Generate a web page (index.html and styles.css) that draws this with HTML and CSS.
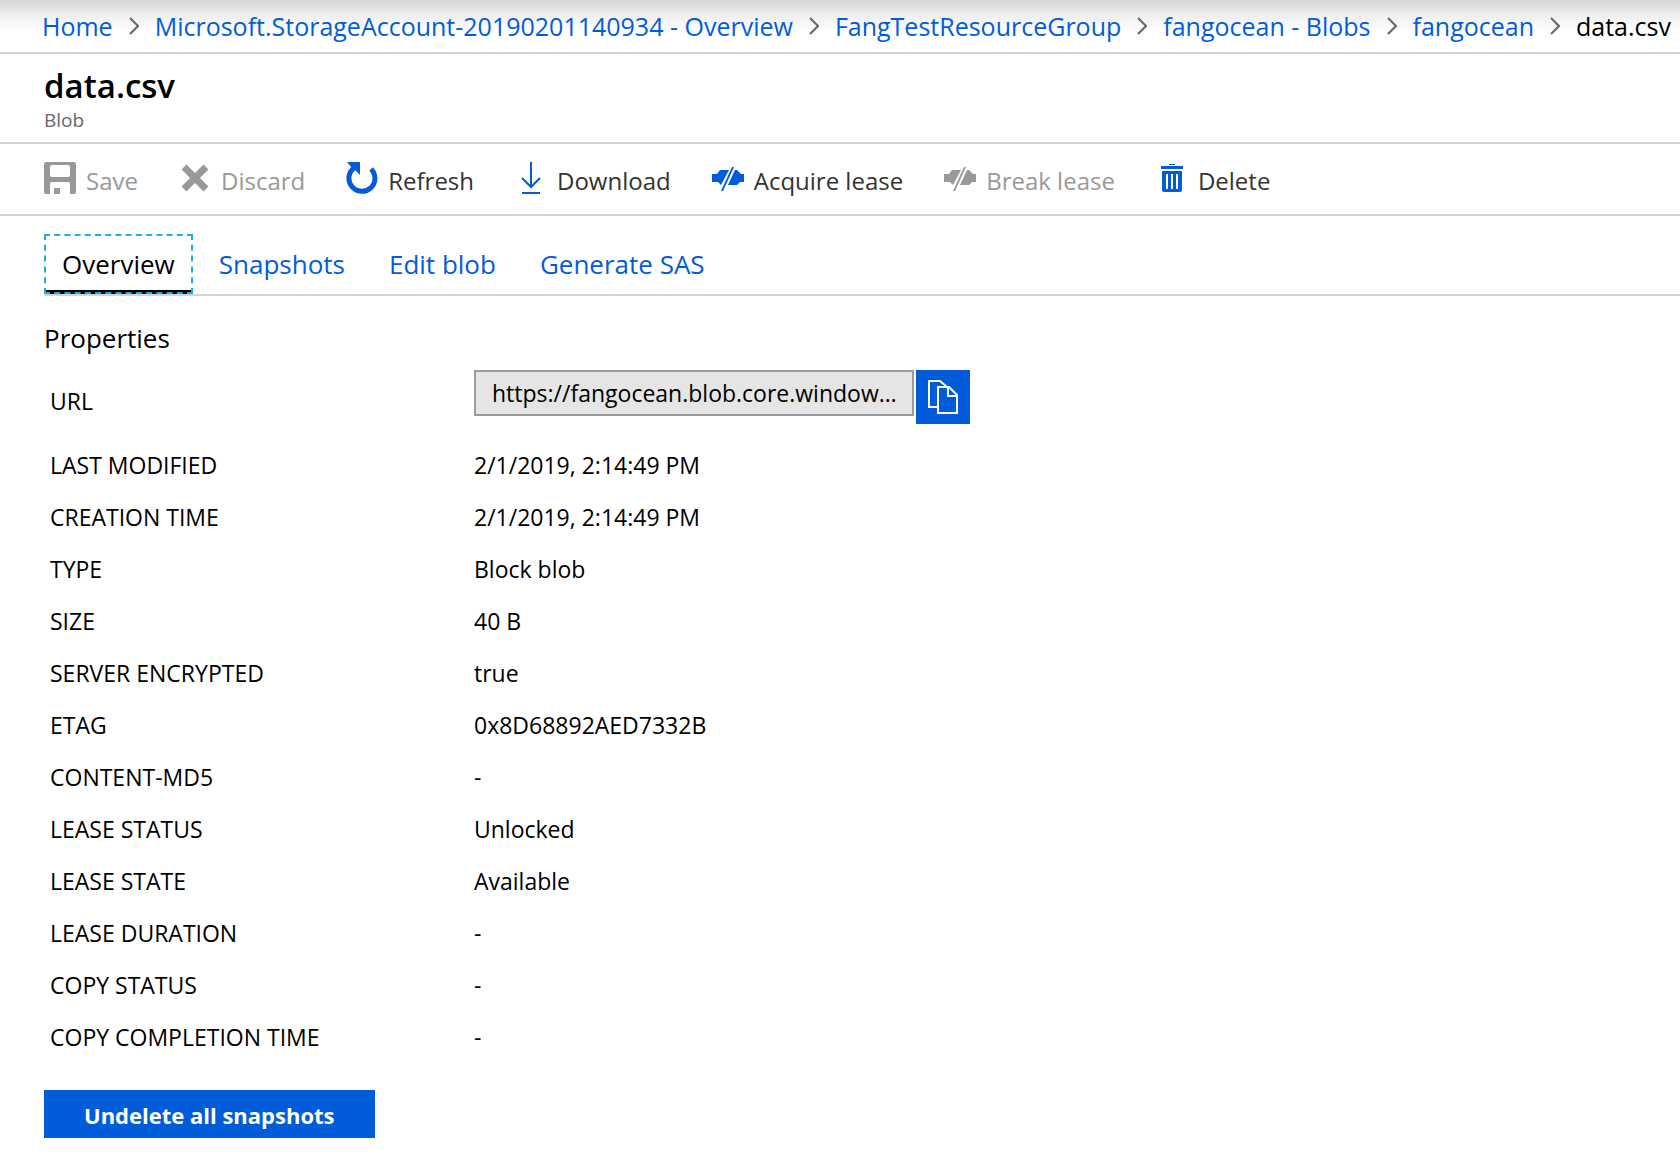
FILE: index.html
```html
<!DOCTYPE html>
<html lang="en">
<head>
<meta charset="utf-8">
<meta name="viewport" content="width=device-width, initial-scale=1">
<title>data.csv - Blob</title>
<link rel="stylesheet" href="styles.css">
</head>
<body>
<svg class="sprite" aria-hidden="true">
  <symbol id="chevron" viewBox="0 0 10 18"><path d="M1 1l8 8-8 8" fill="none" stroke="#666" stroke-width="2"/></symbol>
  <symbol id="lease" viewBox="0 0 32 32"><path fill="currentColor" d="M0 12h5l3-4h9L9 23l-3-3H0zM20 5h2L11 29H9zM23 8h2l4 4h3v8h-4l-3 3h-9z"/></symbol>
</svg>

<nav class="breadcrumb" aria-label="Breadcrumb">
  <a href="#">Home</a>
  <svg class="chevron" aria-hidden="true"><use href="#chevron"/></svg>
  <a href="#">Microsoft.StorageAccount-20190201140934 - Overview</a>
  <svg class="chevron" aria-hidden="true"><use href="#chevron"/></svg>
  <a href="#">FangTestResourceGroup</a>
  <svg class="chevron" aria-hidden="true"><use href="#chevron"/></svg>
  <a href="#">fangocean - Blobs</a>
  <svg class="chevron" aria-hidden="true"><use href="#chevron"/></svg>
  <a href="#">fangocean</a>
  <svg class="chevron" aria-hidden="true"><use href="#chevron"/></svg>
  <span aria-current="page">data.csv</span>
</nav>

<header class="blade-header">
  <h1>data.csv</h1>
  <p>Blob</p>
</header>

<div class="toolbar" role="toolbar" aria-label="Blob commands">
  <button type="button" disabled>
    <svg class="icon" viewBox="0 0 32 32" aria-hidden="true"><path fill="currentColor" fill-rule="evenodd" d="M2 0h28a2 2 0 0 1 2 2v28a2 2 0 0 1-2 2h-4V22a2 2 0 0 0-2-2H8a2 2 0 0 0-2 2v10H2a2 2 0 0 1-2-2V2a2 2 0 0 1 2-2zM8 3a2 2 0 0 0-2 2v8a2 2 0 0 0 2 2h16a2 2 0 0 0 2-2V5a2 2 0 0 0-2-2zM10 26h6v6h-6z"/></svg>
    Save
  </button>
  <button type="button" disabled>
    <svg class="icon" viewBox="0 0 32 32" aria-hidden="true"><path fill="none" stroke="currentColor" stroke-width="7" d="M5 5l22 22M27 5L5 27"/></svg>
    Discard
  </button>
  <button type="button">
    <svg class="icon" viewBox="0 0 32 32" aria-hidden="true"><path fill="none" stroke="currentColor" stroke-width="5" d="M25 7A13 13 0 1 1 8 6"/><path fill="currentColor" d="M1 0h13v13l-4-4-4-3z"/></svg>
    Refresh
  </button>
  <button type="button">
    <svg class="icon" viewBox="0 0 32 32" aria-hidden="true"><path fill="none" stroke="currentColor" stroke-width="2" d="M16 0v25M7 16l9 9 9-9M7 31h18"/></svg>
    Download
  </button>
  <button type="button">
    <svg class="icon" aria-hidden="true"><use href="#lease"/></svg>
    Acquire lease
  </button>
  <button type="button" disabled>
    <svg class="icon" aria-hidden="true"><use href="#lease"/></svg>
    Break lease
  </button>
  <button type="button">
    <svg class="icon" viewBox="0 0 32 32" aria-hidden="true"><path fill="currentColor" fill-rule="evenodd" d="M13 2h6v1h-6zM5 4h22v3H5zM6 9h20v19a2 2 0 0 1-2 2H8a2 2 0 0 1-2-2zM10 12v15h2V12zM15 12v15h2V12zM20 12v15h2V12z"/></svg>
    Delete
  </button>
</div>

<main class="content">
  <nav class="tabs" aria-label="Blob sections">
    <a class="tab active" href="#" aria-current="true">Overview</a>
    <a class="tab" href="#">Snapshots</a>
    <a class="tab" href="#">Edit blob</a>
    <a class="tab" href="#">Generate SAS</a>
  </nav>

  <h2>Properties</h2>
  <table class="properties">
    <tbody>
      <tr class="url-row">
        <th scope="row"><label for="url">URL</label></th>
        <td>
          <div class="copy-field">
            <input id="url" type="text" readonly value="https://fangocean.blob.core.windows.net/fangocean/data.csv">
            <button type="button" aria-label="Copy URL">
              <svg viewBox="0 0 30 34" aria-hidden="true"><path fill="none" stroke="currentColor" stroke-width="2" d="M9 27H1V1h11l7 6M10 7h11l8 8v18H10zM20 7v9h9"/></svg>
            </button>
          </div>
        </td>
      </tr>
      <tr><th scope="row">LAST MODIFIED</th><td>2/1/2019, 2:14:49 PM</td></tr>
      <tr><th scope="row">CREATION TIME</th><td>2/1/2019, 2:14:49 PM</td></tr>
      <tr><th scope="row">TYPE</th><td>Block blob</td></tr>
      <tr><th scope="row">SIZE</th><td>40 B</td></tr>
      <tr><th scope="row">SERVER ENCRYPTED</th><td>true</td></tr>
      <tr><th scope="row">ETAG</th><td>0x8D68892AED7332B</td></tr>
      <tr><th scope="row">CONTENT-MD5</th><td>-</td></tr>
      <tr><th scope="row">LEASE STATUS</th><td>Unlocked</td></tr>
      <tr><th scope="row">LEASE STATE</th><td>Available</td></tr>
      <tr><th scope="row">LEASE DURATION</th><td>-</td></tr>
      <tr><th scope="row">COPY STATUS</th><td>-</td></tr>
      <tr><th scope="row">COPY COMPLETION TIME</th><td>-</td></tr>
    </tbody>
  </table>

  <button class="primary" type="button">Undelete all snapshots</button>
</main>
</body>
</html>
```
FILE: styles.css
```css
* {
  box-sizing: border-box;
}

body {
  margin: 0;
  background: #fff;
  color: #000;
  font-family: "Open Sans", "Noto Sans", sans-serif;
  font-size: 23px;
}

button,
input {
  font: inherit;
}

a {
  color: #015cda;
  text-decoration: none;
}

.sprite {
  display: none;
}

.breadcrumb {
  display: flex;
  align-items: center;
  gap: 16px;
  padding: 8px 0 8px 42px;
  border-bottom: 2px solid #d4d4d4;
  background: linear-gradient(#d7d7d7, #dbdbdb 4px, #ededed 14px, #fff 32px);
  font-size: 25px;
  line-height: 36px;
  white-space: nowrap;
}

.chevron {
  flex: none;
  width: 10px;
  height: 18px;
}

.blade-header {
  padding: 12px 44px 8px;
  border-bottom: 2px solid #d4d4d4;
}

.blade-header h1 {
  margin: 0;
  font-size: 33px;
  font-weight: 600;
  line-height: 40px;
}

.blade-header p {
  margin: 0;
  color: #666;
  font-size: 19px;
  line-height: 28px;
}

.toolbar {
  display: flex;
  gap: 41px;
  padding: 18px 44px 15px;
  border-bottom: 2px solid #d4d4d4;
}

.toolbar button {
  display: flex;
  align-items: flex-start;
  gap: 10px;
  padding: 0;
  border: 0;
  background: none;
  color: #333;
  font-size: 24px;
  line-height: 37px;
  white-space: nowrap;
}

.toolbar button:disabled {
  color: #999;
}

.icon {
  width: 32px;
  height: 32px;
  color: #015cda;
}

button:disabled .icon {
  color: #999;
}

.content {
  padding: 18px 0 16px 44px;
}

.tabs {
  display: flex;
  gap: 8px;
  border-bottom: 2px solid #d4d4d4;
}

.tab {
  padding: 12px 18px;
  font-size: 26px;
  line-height: 36px;
}

.tab.active {
  padding: 10px 16px;
  border: 2px dashed #1bb1dc;
  background: linear-gradient(#000, #000) bottom / 100% 4px no-repeat border-box;
  color: #000;
}

h2 {
  margin: 24px 0 14px;
  font-size: 26px;
  font-weight: 400;
  line-height: 36px;
}

.properties {
  border-collapse: collapse;
  line-height: 32px;
}

.properties th,
.properties td {
  height: 52px;
  padding: 9px 0 11px;
  font-weight: 400;
  text-align: left;
  vertical-align: middle;
}

.properties th {
  width: 430px;
  padding-left: 6px;
}

.properties .url-row th,
.properties .url-row td {
  height: 70px;
  padding-top: 0;
  padding-bottom: 8px;
}

.properties .url-row td {
  vertical-align: top;
}

.copy-field {
  display: flex;
  align-items: flex-start;
  gap: 2px;
}

.copy-field input {
  width: 440px;
  height: 46px;
  padding: 0 8px 0 16px;
  border: 2px solid #9c9c9c;
  border-radius: 0;
  background: #e5e5e5;
  color: #000;
  text-overflow: ellipsis;
}

.copy-field button {
  display: flex;
  align-items: center;
  justify-content: center;
  width: 54px;
  height: 54px;
  padding: 0;
  border: 0;
  background: #015cda;
  color: #fff;
}

.copy-field svg {
  width: 30px;
  height: 34px;
}

.primary {
  display: block;
  min-width: 330px;
  margin-top: 26px;
  padding: 9px 40px 7px;
  border: 0;
  background: #015cda;
  color: #fff;
  font-size: 22px;
  font-weight: 700;
  line-height: 32px;
}
```
